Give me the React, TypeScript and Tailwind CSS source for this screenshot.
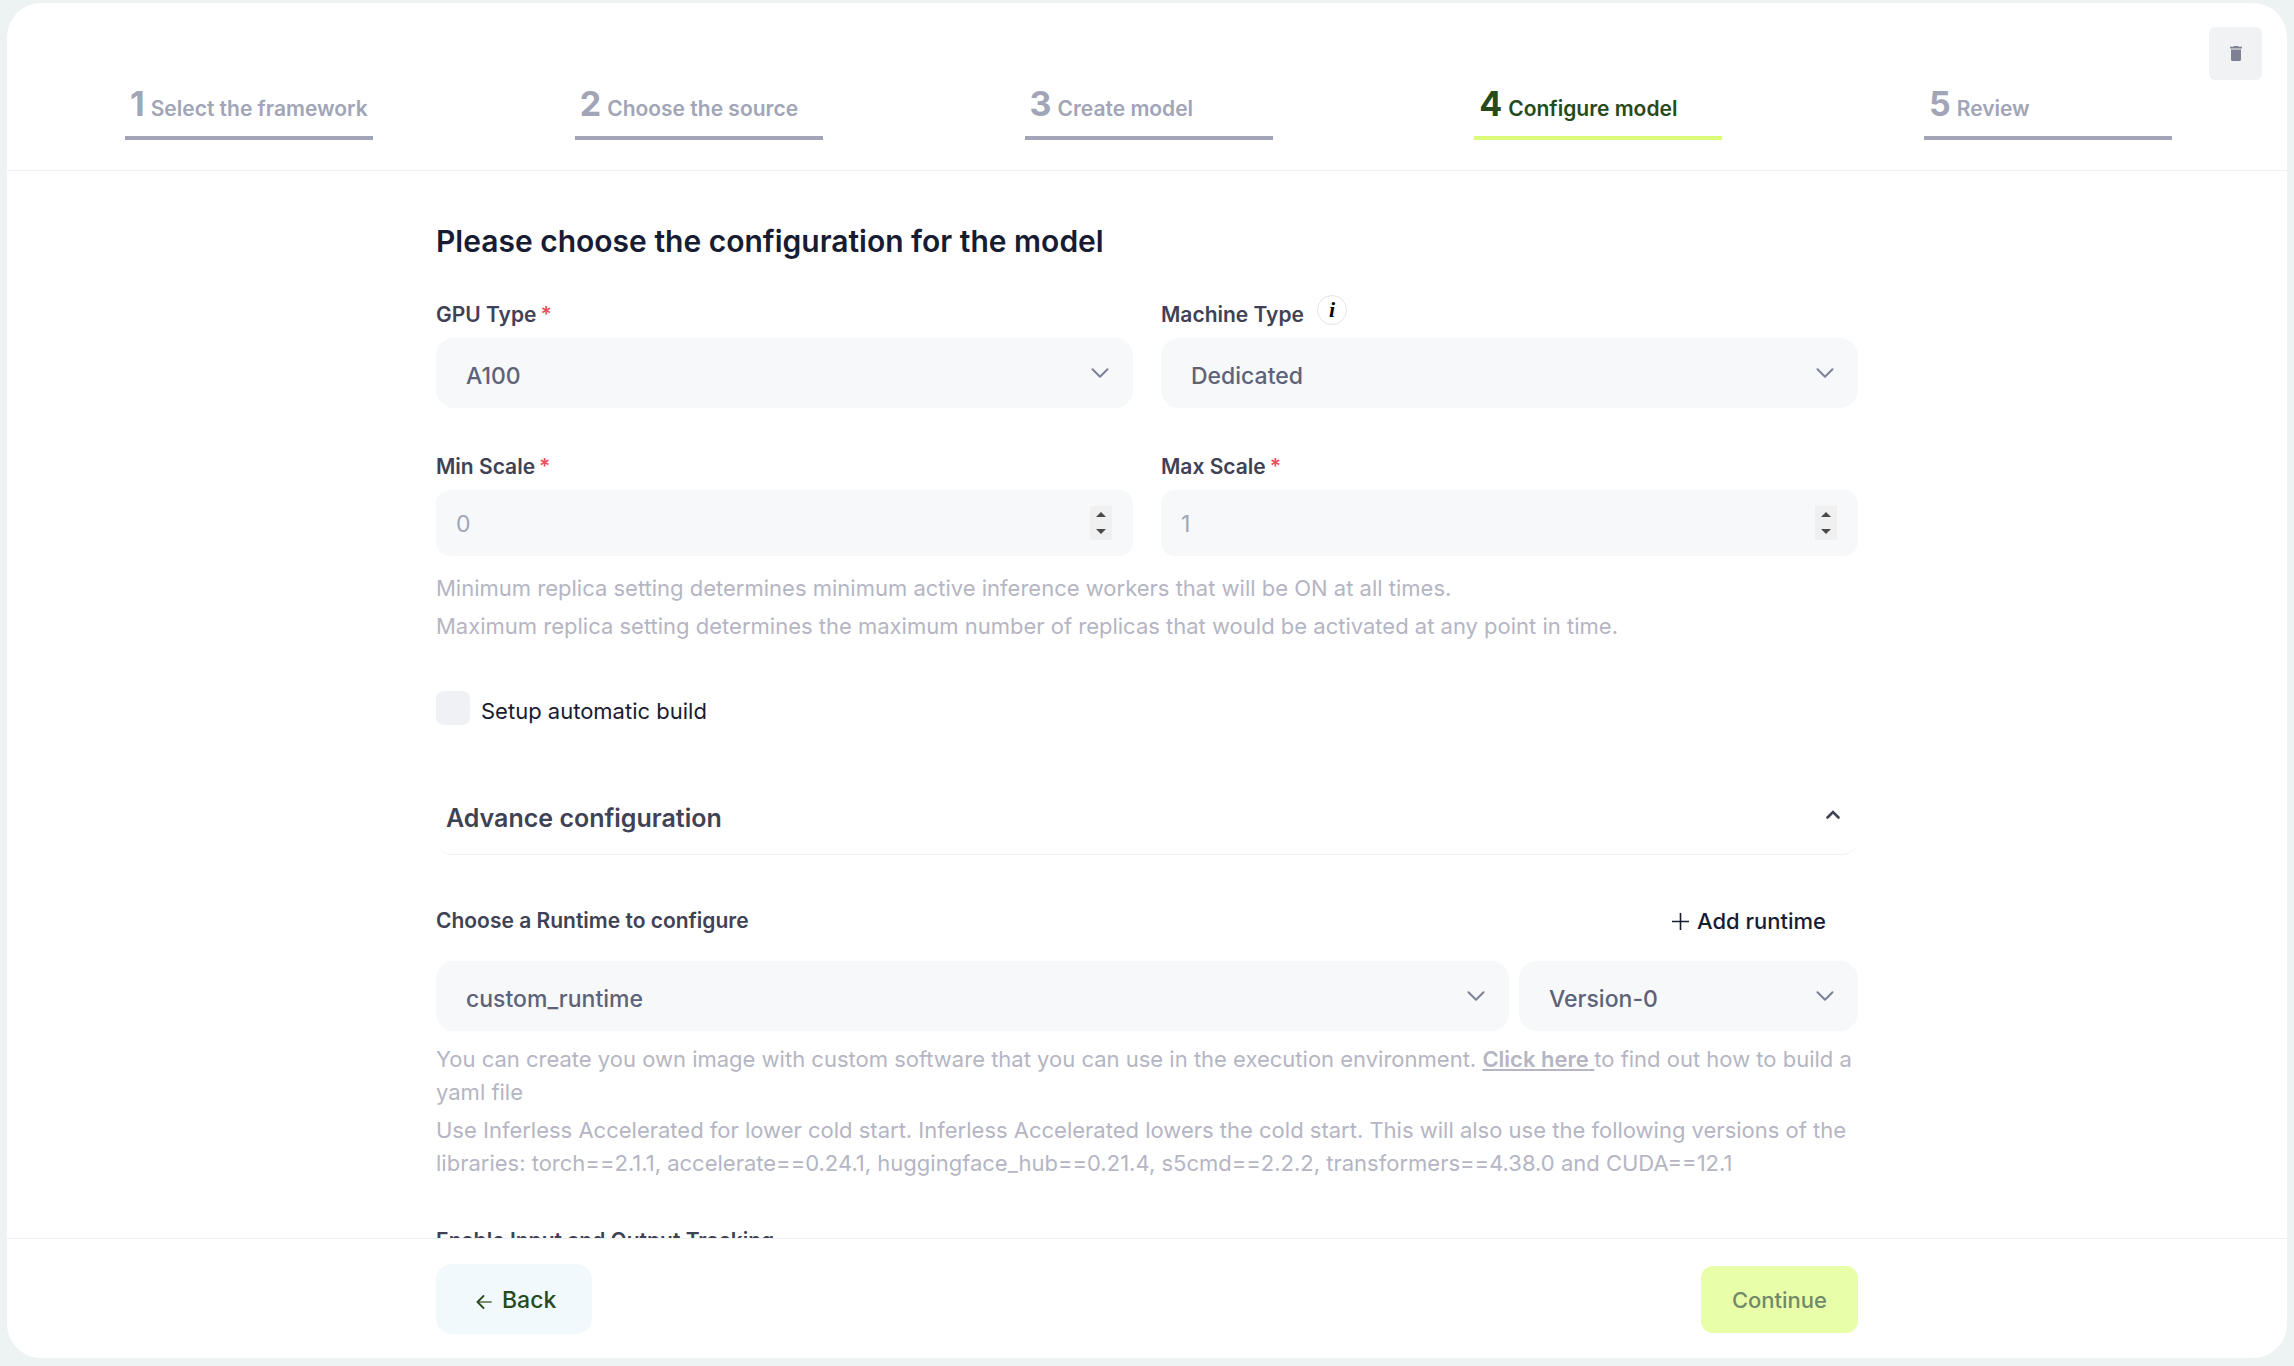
import { useState } from "react";
import type { ReactNode } from "react";

const steps = ["Select the framework", "Choose the source", "Create model", "Configure model", "Review"];
const activeStep = 3;

function Stepper() {
  return (
    <ol className="flex w-full justify-between pr-[115px] pl-[118px]">
      {steps.map((label, i) => {
        const active = i === activeStep;
        return (
          <li
            key={label}
            aria-current={active ? "step" : undefined}
            className={
              active
                ? "flex w-[248px] items-baseline gap-1.5 border-b-4 border-[#dbfb78] pb-[11px] pl-[5px] whitespace-nowrap text-[#264a1b]"
                : "flex w-[248px] items-baseline gap-1.5 border-b-4 border-[#a1a5b7] pb-[11px] pl-[5px] whitespace-nowrap text-[#a1a5b7]"
            }
          >
            <span className="text-[34px] leading-10 font-bold">{i + 1}</span>
            <span className="text-[21px] leading-8 font-semibold">{label}</span>
          </li>
        );
      })}
    </ol>
  );
}

function Chevron() {
  return (
    <svg
      viewBox="0 0 18 10"
      className="pointer-events-none absolute top-[30px] right-6 h-[10px] w-[18px]"
      fill="none"
      stroke="#7e8299"
      strokeWidth="2"
      strokeLinecap="round"
      strokeLinejoin="round"
      aria-hidden="true"
    >
      <path d="M1.5 1.2 9 8.7l7.5-7.5" />
    </svg>
  );
}

function Select({ id, label, options }: { id: string; label?: string; options: string[] }) {
  return (
    <div className="relative">
      <select
        id={id}
        aria-label={label}
        className="h-[70px] w-full appearance-none rounded-[18px] bg-[#f6f8fa] pt-1.5 pr-14 pl-[30px] text-[23px] font-medium text-[#5e6278] outline-none"
      >
        {options.map((o) => (
          <option key={o}>{o}</option>
        ))}
      </select>
      <Chevron />
    </div>
  );
}

function NumberField({ id, initial }: { id: string; initial: number }) {
  const [value, setValue] = useState(initial);
  return (
    <div className="relative">
      <input
        id={id}
        type="number"
        value={value}
        onChange={(e) => setValue(Number(e.target.value))}
        className="h-[66px] w-full rounded-[14px] bg-[#f6f8fa] pt-0.5 pr-14 pl-5 text-[23px] text-[#a1a5b7] outline-none [appearance:textfield] [&::-webkit-inner-spin-button]:appearance-none"
      />
      <div className="absolute top-4 right-[21px] flex h-[34px] w-[22px] flex-col bg-[#f0f0f0]">
        <button
          type="button"
          aria-label="Increase"
          onClick={() => setValue(value + 1)}
          className="flex flex-1 items-center justify-center"
        >
          <svg viewBox="0 0 10 5" className="h-[5px] w-2.5" fill="#4a4a4a">
            <path d="M5 0 10 5H0z" />
          </svg>
        </button>
        <button
          type="button"
          aria-label="Decrease"
          onClick={() => setValue(Math.max(0, value - 1))}
          className="flex flex-1 items-center justify-center"
        >
          <svg viewBox="0 0 10 5" className="h-[5px] w-2.5" fill="#4a4a4a">
            <path d="M0 0h10L5 5z" />
          </svg>
        </button>
      </div>
    </div>
  );
}

function FieldLabel({ id, children, required }: { id: string; children: ReactNode; required?: boolean }) {
  return (
    <label htmlFor={id} className="text-[21px] leading-8 font-semibold text-[#3f4254]">
      {children}
      {required && <span className="ml-1 text-[#e8515d]">*</span>}
    </label>
  );
}

export default function App() {
  const [open, setOpen] = useState(true);
  return (
    <div className="h-screen bg-[#edf2f2] px-[7px] pt-[3px] pb-2 font-['Inter',sans-serif] text-[#181c32]">
      <div className="flex h-full flex-col overflow-hidden rounded-[34px] bg-white">
        <header className="relative shrink-0 border-b border-[#eff0f2] pt-[81px] pb-[30px]">
          <Stepper />
          <button
            type="button"
            aria-label="Delete"
            className="absolute top-6 right-[25px] flex size-[53px] items-center justify-center rounded-md bg-[#f1f2f4]"
          >
            <svg viewBox="0 0 12 15" className="h-[15px] w-3" fill="#7e8194">
              <path d="M4 0h4l.8.8H12v1.7H0V.8h3.2zM1 3.5h10v10c0 .9-.6 1.5-1.5 1.5h-7C1.600 15 1 14.400 1 13.500z" />
            </svg>
          </button>
        </header>

        <main className="min-h-0 flex-1 overflow-hidden">
          <form className="mx-auto w-full max-w-[1422px] pt-[50px]">
            <h1 className="text-[30px] leading-10 font-semibold">Please choose the configuration for the model</h1>

            <div className="mt-[38px] grid grid-cols-2 gap-x-7 gap-y-[43px]">
              <div className="flex flex-col gap-[7px]">
                <FieldLabel id="gpu" required>
                  GPU Type
                </FieldLabel>
                <Select id="gpu" options={["A100"]} />
              </div>
              <div className="flex flex-col gap-[7px]">
                <div className="flex gap-[13px]">
                  <FieldLabel id="machine">Machine Type</FieldLabel>
                  <button
                    type="button"
                    aria-label="About machine types"
                    className="-mt-1 flex size-[30px] items-center justify-center rounded-full border border-[#e2e4ea] font-['Liberation_Serif',serif] text-[22px] leading-none font-bold text-black italic"
                  >
                    i
                  </button>
                </div>
                <Select id="machine" options={["Dedicated"]} />
              </div>
              <div className="flex flex-col gap-[7px]">
                <FieldLabel id="min" required>
                  Min Scale
                </FieldLabel>
                <NumberField id="min" initial={0} />
              </div>
              <div className="flex flex-col gap-[7px]">
                <FieldLabel id="max" required>
                  Max Scale
                </FieldLabel>
                <NumberField id="max" initial={1} />
              </div>
            </div>

            <div className="mt-4 flex flex-col gap-1.5 text-[22px] leading-8 text-[#b5b5c3]">
              <p>Minimum replica setting determines minimum active inference workers that will be ON at all times.</p>
              <p>
                Maximum replica setting determines the maximum number of replicas that would be activated at any point
                in time.
              </p>
            </div>

            <div className="mt-[49px] flex h-[36px] items-start gap-[11px]">
              <input
                id="auto"
                type="checkbox"
                className="size-[34px] appearance-none rounded-lg bg-[#f0f1f5] checked:bg-[#dbfb78]"
              />
              <label htmlFor="auto" className="pt-1 text-[22px] leading-8">
                Setup automatic build
              </label>
            </div>

            <button
              type="button"
              aria-expanded={open}
              onClick={() => setOpen(!open)}
              className="mt-14 flex w-full items-start justify-between rounded-2xl border-b border-[#f1f2f4] pt-[15px] pr-[18px] pb-4 pl-2.5 text-left"
            >
              <span className="text-[25px] leading-10 font-semibold text-[#3f4254]">Advance configuration</span>
              <svg
                viewBox="0 0 14 9"
                className="mt-3 h-[9px] w-3.5"
                fill="none"
                stroke="#3f4254"
                strokeWidth="2.600"
                strokeLinecap="round"
              >
                <path d="M1.500 7.500 7 2l5.500 5.500" />
              </svg>
            </button>

            {open && (
              <div className="pt-[50px]">
                <div className="flex items-center justify-between pr-8">
                  <FieldLabel id="runtime">Choose a Runtime to configure</FieldLabel>
                  <button type="button" className="flex items-center gap-2 text-[22px] leading-8 font-medium">
                    <svg viewBox="0 0 17 17" className="size-[17px]" fill="none" stroke="#181c32" strokeWidth="1.600">
                      <path d="M8.500 0v17M0 8.500h17" />
                    </svg>
                    Add runtime
                  </button>
                </div>
                <div className="mt-6 grid grid-cols-[1fr_339px] gap-2.5">
                  <Select id="runtime" options={["custom_runtime"]} />
                  <Select id="version" label="Runtime version" options={["Version-0"]} />
                </div>
                <div className="mt-3 flex flex-col gap-[5px] text-[22px] leading-[33px] text-[#b5b5c3]">
                  <p>
                    You can create you own image with custom software that you can use in the execution environment.{" "}
                    <a href="#docs" className="font-semibold underline decoration-2 underline-offset-2">
                      Click here{" "}
                    </a>
                    to find out how to build a yaml file
                  </p>
                  <p>
                    Use Inferless Accelerated for lower cold start. Inferless Accelerated lowers the cold start. This
                    will also use the following versions of the libraries: torch==2.1.1, accelerate==0.24.1,
                    huggingface_hub==0.21.4, s5cmd==2.2.2, transformers==4.38.0 and CUDA==12.1
                  </p>
                </div>
                <h2 className="mt-[45px] text-[21px] leading-8 font-semibold text-[#3f4254]">
                  Enable Input and Output Tracking
                </h2>
              </div>
            )}
          </form>
        </main>

        <footer className="shrink-0 border-t border-[#eff0f4] pt-[25px] pb-6">
          <div className="mx-auto flex w-full max-w-[1422px] items-center justify-between">
            <button
              type="button"
              className="flex h-[70px] items-center gap-2.5 rounded-2xl bg-[#f2f9fd] pt-0.5 pr-9 pl-10 text-[23px] font-medium text-[#264a1b]"
            >
              <svg
                viewBox="0 0 16 14"
                className="mt-1 h-3.5 w-4"
                fill="none"
                stroke="#264a1b"
                strokeWidth="1.800"
                strokeLinecap="round"
                strokeLinejoin="round"
              >
                <path d="M7.500 1 1.500 7l6 6" />
                <path d="M2 7h13" opacity=".6" />
              </svg>
              Back
            </button>
            <button
              type="submit"
              disabled
              className="h-[67px] rounded-xl bg-[#e9fea9] px-[31px] pt-0.5 text-[22px] font-medium text-[#72896a]"
            >
              Continue
            </button>
          </div>
        </footer>
      </div>
    </div>
  );
}
